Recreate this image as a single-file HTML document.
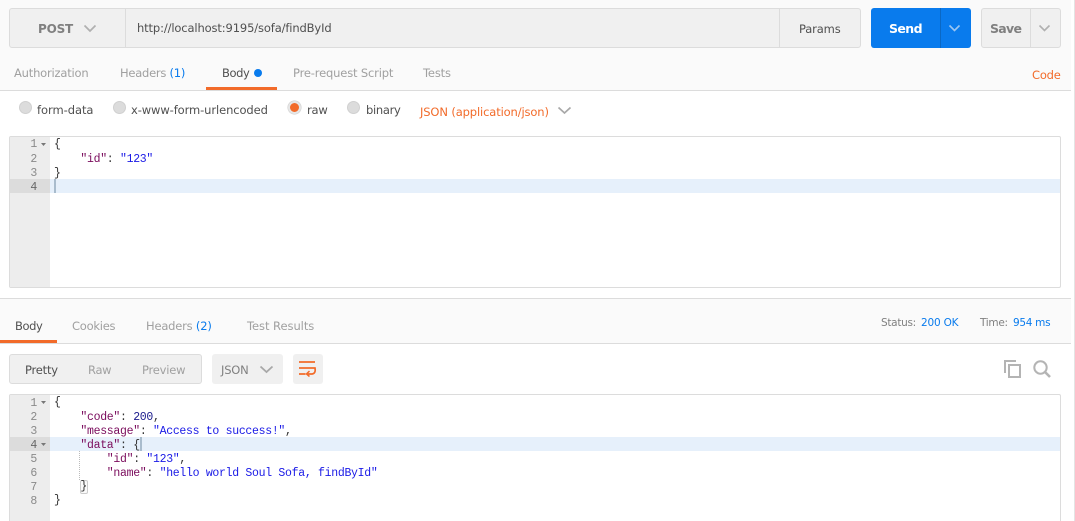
<!DOCTYPE html>
<html><head><meta charset="utf-8"><style>
html,body{margin:0;padding:0;width:1075px;height:521px;overflow:hidden;background:#fff}
body{position:relative;font-family:"DejaVu Sans","Liberation Sans",sans-serif;font-size:11.5px;color:#505050}
.a{position:absolute;box-sizing:border-box}
.t{position:absolute;white-space:pre;line-height:16px;height:16px;letter-spacing:-.2px}
.g{color:#a0a0a0}
.b{color:#097bed}
.o{color:#f26b2a}
.m{position:absolute;white-space:pre;font-family:"Liberation Mono",monospace;font-size:11.5px;letter-spacing:-.3px;line-height:14px;height:14px;color:#333}
.k{color:#7a0b5c}.s{color:#1a1ae6}.n{color:#1a1a8c}
.ln{color:#8a8a8a;width:28px;text-align:right;left:9px}
.r{position:absolute;width:13px;height:13px;border-radius:50%;background:#dcdcdc;border:1px solid #d0d0d0;box-sizing:border-box}
svg{position:absolute;overflow:visible}
</style></head><body>
<div class="a" style="left:0;top:0;width:1071px;height:91px;background:#fafafa;border-bottom:1px solid #dcdcdc"></div>
<div class="a" style="left:1074px;top:0;width:1px;height:521px;background:#e4e4e4"></div>
<div class="a" style="left:9px;top:8px;width:852px;height:40px;background:#f0f0f0;border:1px solid #dcdcdc;border-radius:3px"></div>
<div class="a" style="left:125px;top:9px;width:1px;height:38px;background:#dcdcdc"></div>
<div class="a" style="left:779px;top:9px;width:1px;height:38px;background:#dcdcdc"></div>
<div class="t" style="left:38px;top:21px;font-size:12px;font-weight:bold;color:#808080;letter-spacing:-.2px">POST</div>
<svg style="left:84px;top:25px" width="12" height="8"><path d="M.5 .5L6 6L11.5 .5" fill="none" stroke="#b0b0b0" stroke-width="1.7"/></svg>
<div class="t" style="left:137px;top:20px;letter-spacing:-.13px">http://localhost:9195/sofa/findById</div>
<div class="t" style="left:799px;top:21px;letter-spacing:-.15px">Params</div>
<div class="a" style="left:871px;top:8px;width:100px;height:40px;background:#097bed;border-radius:3px"></div>
<div class="a" style="left:940px;top:8px;width:1px;height:40px;background:#0a68c4"></div>
<div class="t" style="left:889px;top:21px;color:#fff;font-size:12.5px;font-weight:bold;letter-spacing:-.6px">Send</div>
<svg style="left:949px;top:25px" width="11" height="7"><path d="M.5 .5L5.5 5.5L10.5 .5" fill="none" stroke="#9cc6f2" stroke-width="1.6"/></svg>
<div class="a" style="left:981px;top:8px;width:80px;height:40px;background:#f0f0f0;border:1px solid #dcdcdc;border-radius:3px"></div>
<div class="a" style="left:1030px;top:9px;width:1px;height:38px;background:#dcdcdc"></div>
<div class="t" style="left:990px;top:21px;font-size:12.5px;font-weight:bold;color:#808080;letter-spacing:-.7px">Save</div>
<svg style="left:1039px;top:25px" width="11" height="7"><path d="M.5 .5L5.5 5.5L10.5 .5" fill="none" stroke="#b0b0b0" stroke-width="1.6"/></svg>

<div class="t g" style="left:14px;top:65px">Authorization</div>
<div class="t g" style="left:120px;top:65px;letter-spacing:-.25px">Headers <span class="b">(1)</span></div>
<div class="t" style="left:222px;top:65px;letter-spacing:-.4px">Body</div>
<div class="a" style="left:254px;top:69px;width:8px;height:8px;border-radius:50%;background:#097bed"></div>
<div class="t g" style="left:293px;top:65px;letter-spacing:-.16px">Pre-request Script</div>
<div class="t g" style="left:423px;top:65px;letter-spacing:-.15px">Tests</div>
<div class="a" style="left:206px;top:87px;width:71px;height:3px;background:#f26b2a"></div>
<div class="t o" style="left:1032px;top:67px">Code</div>

<div class="r" style="left:19px;top:101px"></div>
<div class="t" style="left:37px;top:102px;letter-spacing:-.05px">form-data</div>
<div class="r" style="left:113px;top:101px"></div>
<div class="t" style="left:131px;top:102px;letter-spacing:-.1px">x-www-form-urlencoded</div>
<div class="r" style="left:288px;top:101px;background:#f26b2a;border:2px solid #e6e6e6;box-shadow:0 0 0 .5px #ccc"></div>
<div class="t" style="left:307px;top:102px;letter-spacing:-.2px">raw</div>
<div class="r" style="left:347px;top:101px"></div>
<div class="t" style="left:366px;top:102px;letter-spacing:-.3px">binary</div>
<div class="t o" style="left:420px;top:104px;letter-spacing:-.13px">JSON (application/json)</div>
<svg style="left:558px;top:107px" width="13" height="7"><path d="M.5 .5L6.5 6L12.5 .5" fill="none" stroke="#a8a8a8" stroke-width="1.7"/></svg>

<div class="a" style="left:9px;top:136px;width:1052px;height:152px;border:1px solid #dcdcdc;border-radius:2px;overflow:hidden"><div class="a" style="left:0;top:0;width:40px;height:150px;background:#ededed"></div></div>
<div class="a" style="left:50px;top:179px;width:1010px;height:14px;background:#e6f0fb"></div>
<div class="a" style="left:10px;top:179px;width:40px;height:14px;background:#dcdcdc"></div>
<div class="a" style="left:54px;top:179px;width:2px;height:14px;background:#a9bccd"></div>
<div class="m ln" style="top:138px">1</div><div class="m ln" style="top:153px">2</div><div class="m ln" style="top:167px">3</div><div class="m ln" style="top:181px;color:#666">4</div>
<svg style="left:41px;top:143px" width="5" height="3"><path d="M0 0H5L2.5 3Z" fill="#777"/></svg>
<div class="m" style="left:54px;top:138px">{</div>
<div class="m" style="left:80.4px;top:153px"><span class="k">"id"</span>: <span class="s">"123"</span></div>
<div class="m" style="left:54px;top:167px">}</div>

<div class="a" style="left:0;top:298px;width:1071px;height:46px;background:#fafafa;border-top:1px solid #dcdcdc;border-bottom:1px solid #dcdcdc"></div>
<div class="t" style="left:15px;top:318px;letter-spacing:-.4px">Body</div>
<div class="t g" style="left:72px;top:318px;letter-spacing:-.25px">Cookies</div>
<div class="t g" style="left:146px;top:318px;letter-spacing:-.2px">Headers <span class="b">(2)</span></div>
<div class="t g" style="left:247px;top:318px;letter-spacing:-.05px">Test Results</div>
<div class="a" style="left:0;top:340px;width:57px;height:3px;background:#f26b2a"></div>
<div class="t" style="left:881px;top:315px;color:#808080;font-size:10.5px;letter-spacing:-.3px">Status:</div>
<div class="t b" style="left:921px;top:315px;font-size:10.5px;letter-spacing:-.2px">200 OK</div>
<div class="t" style="left:980px;top:315px;color:#808080;font-size:10.5px;letter-spacing:-.3px">Time:</div>
<div class="t b" style="left:1013px;top:315px;font-size:10.5px;letter-spacing:-.3px">954 ms</div>

<div class="a" style="left:9px;top:354px;width:193px;height:30px;background:#f0f0f0;border:1px solid #dcdcdc;border-radius:3px"></div>
<div class="t" style="left:25px;top:362px">Pretty</div>
<div class="t g" style="left:88px;top:362px;letter-spacing:-.3px">Raw</div>
<div class="t g" style="left:142px;top:362px">Preview</div>
<div class="a" style="left:212px;top:354px;width:71px;height:30px;background:#f0f0f0;border-radius:3px"></div>
<div class="t" style="left:221px;top:362px;color:#808080">JSON</div>
<svg style="left:260px;top:366px" width="13" height="7"><path d="M.5 .5L6.5 6L12.5 .5" fill="none" stroke="#a8a8a8" stroke-width="1.8"/></svg>
<div class="a" style="left:293px;top:354px;width:30px;height:30px;background:#f0f0f0;border-radius:3px"></div>
<svg style="left:299px;top:361px" width="18" height="16"><path d="M0 1H16M0 7H16Q17 12.5 13 13H8M0 13H6.5" fill="none" stroke="#f26b2a" stroke-width="1.7"/><path d="M10.5 10L7.5 13L10.5 15.5" fill="none" stroke="#f26b2a" stroke-width="1.5"/></svg>
<svg style="left:1004px;top:360px" width="17" height="18"><path d="M1 13V1H12" fill="none" stroke="#b4b4b4" stroke-width="2"/><rect x="5" y="5" width="11" height="12" fill="none" stroke="#b4b4b4" stroke-width="2"/></svg>
<svg style="left:1033px;top:360px" width="18" height="18"><circle cx="7.5" cy="7.5" r="6.2" fill="none" stroke="#b4b4b4" stroke-width="2"/><path d="M12 12L17 17" stroke="#b4b4b4" stroke-width="2.6"/></svg>

<div class="a" style="left:9px;top:394px;width:1052px;height:140px;border:1px solid #dcdcdc;border-radius:2px;overflow:hidden"><div class="a" style="left:0;top:0;width:40px;height:140px;background:#ededed"></div></div>
<div class="a" style="left:50px;top:437px;width:1010px;height:14px;background:#e6f0fb"></div>
<div class="a" style="left:10px;top:437px;width:40px;height:14px;background:#dcdcdc"></div>
<div class="m ln" style="top:397px">1</div><div class="m ln" style="top:411px">2</div><div class="m ln" style="top:425px">3</div><div class="m ln" style="top:439px;color:#666">4</div><div class="m ln" style="top:453px">5</div><div class="m ln" style="top:467px">6</div><div class="m ln" style="top:481px">7</div><div class="m ln" style="top:495px">8</div>
<svg style="left:41px;top:401px" width="5" height="3"><path d="M0 0H5L2.5 3Z" fill="#777"/></svg>
<svg style="left:41px;top:443px" width="5" height="3"><path d="M0 0H5L2.5 3Z" fill="#777"/></svg>
<div class="m" style="left:54px;top:396px">{</div>
<div class="m" style="left:80.4px;top:411px"><span class="k">"code"</span>: <span class="n">200</span>,</div>
<div class="m" style="left:80.4px;top:425px"><span class="k">"message"</span>: <span class="s">"Access to success!"</span>,</div>
<div class="m" style="left:80.4px;top:439px"><span class="k">"data"</span>: {</div>
<div class="a" style="left:140px;top:437px;width:2px;height:14px;background:#a9bccd"></div>
<div class="a" style="left:79px;top:451px;width:0;height:29px;border-left:1px dotted #bbb"></div>
<div class="m" style="left:106.8px;top:453px"><span class="k">"id"</span>: <span class="s">"123"</span>,</div>
<div class="m" style="left:106.8px;top:467px"><span class="k">"name"</span>: <span class="s">"hello world Soul Sofa, findById"</span></div>
<div class="a" style="left:80px;top:480px;width:8px;height:14px;border:1px solid #ccc;border-radius:2px;background:#fafafa"></div>
<div class="m" style="left:80.4px;top:480px">}</div>
<div class="m" style="left:54px;top:494px">}</div>
</body></html>
